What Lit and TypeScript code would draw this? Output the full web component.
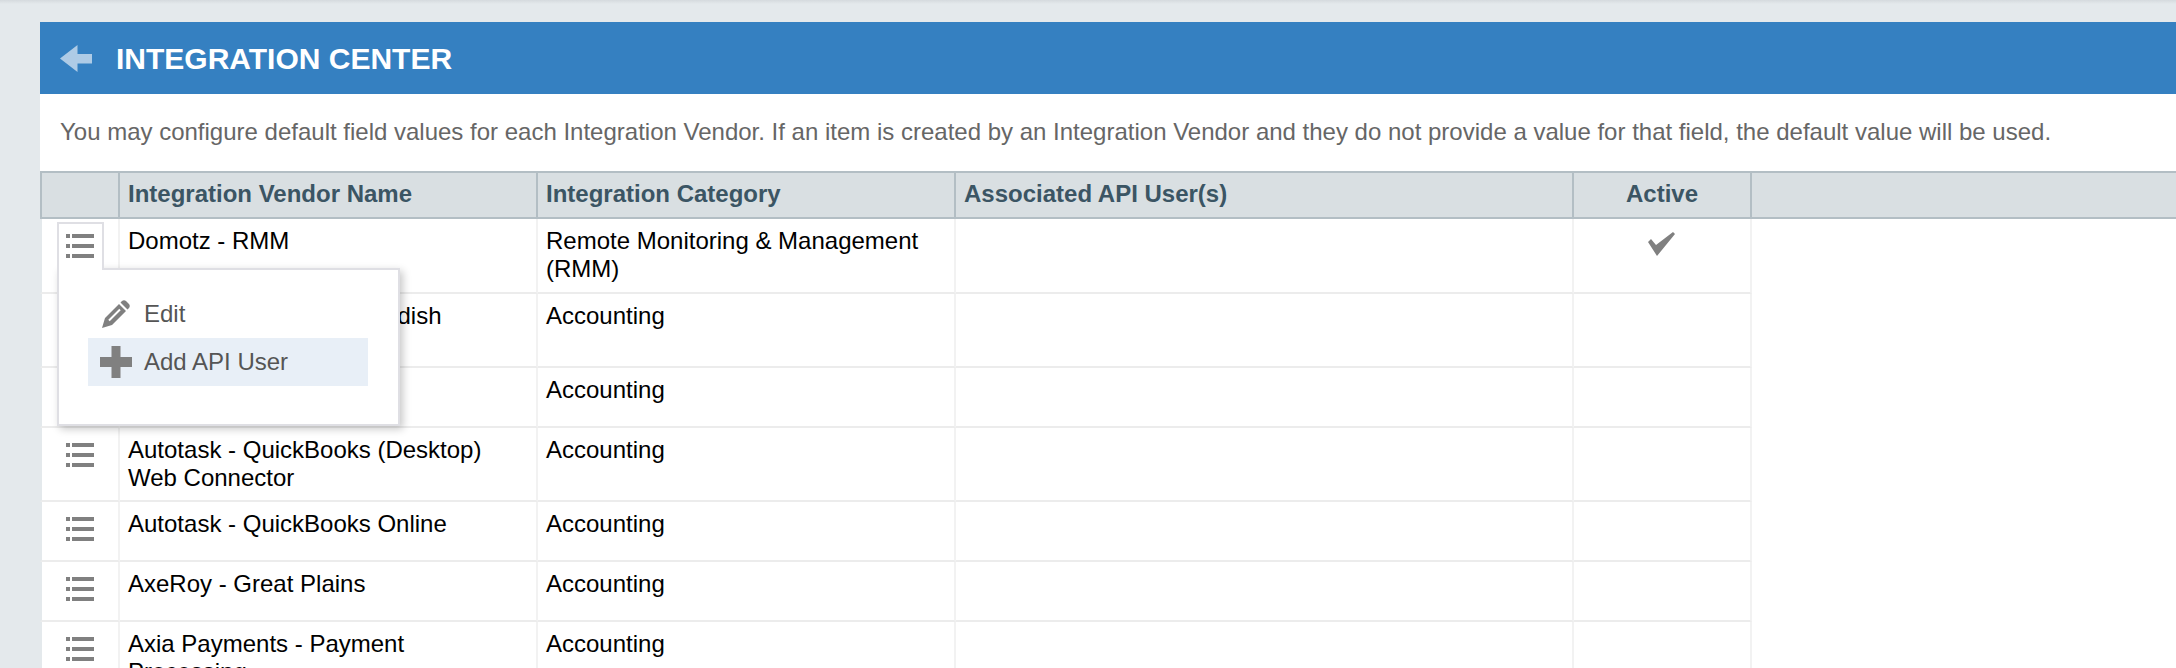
import { LitElement, html, css } from "lit";
import { customElement } from "lit/decorators.js";

const listIcon = html`<svg class="list" viewBox="0 0 28 24" width="28" height="24" aria-hidden="true"><path fill="#808080" d="M0 0h4v4H0zM6 0h22v4H6zM0 10h4v4H0zM6 10h22v4H6zM0 20h4v4H0zM6 20h22v4H6z"/></svg>`;

const rows: { name: string[]; cat: string[]; active?: boolean }[] = [
  { name: ["Domotz - RMM"], cat: ["Remote Monitoring & Management", "(RMM)"], active: true },
  { name: ["Autotask - Bokföring Swedish", "Connector"], cat: ["Accounting"] },
  { name: ["Autotask - Great Plains"], cat: ["Accounting"] },
  { name: ["Autotask - QuickBooks (Desktop)", "Web Connector"], cat: ["Accounting"] },
  { name: ["Autotask - QuickBooks Online"], cat: ["Accounting"] },
  { name: ["AxeRoy - Great Plains"], cat: ["Accounting"] },
  { name: ["Axia Payments - Payment", "Processing"], cat: ["Accounting"] },
];

@customElement("app-root")
export class AppRoot extends LitElement {
  static styles = css`
    :host {
      display: block;
      height: 668px;
      overflow: hidden;
      background: #e4e9ec;
      font-family: "Liberation Sans", Arial, sans-serif;
      font-size: 24px;
      line-height: 28px;
      color: #000;
    }
    .topshade {
      height: 4px;
      background: linear-gradient(#d5dade, #e4e9ec);
    }
    .panel {
      margin: 18px 0 0 40px;
      background: #fff;
    }
    .titlebar {
      height: 72px;
      background: #3580c1;
      display: flex;
      align-items: center;
      gap: 24px;
      padding: 2px 0 0 20px;
      box-sizing: border-box;
      color: #fff;
      font-weight: 700;
      font-size: 30px;
    }
    .arrow {
      margin-top: -2px;
    }
    .desc {
      padding: 24px 0 23px 20px;
      color: #666;
      height: 30px;
      white-space: nowrap;
    }
    .row {
      display: grid;
      grid-template-columns: 80px 418px 418px 618px 178px 1fr;
    }
    .head {
      background: #d9dfe2;
      border-top: 2px solid #b3bec4;
      border-bottom: 2px solid #b3bec4;
      height: 44px;
      font-weight: 700;
      color: #3b5564;
      line-height: 42px;
    }
    .head > div {
      border-right: 2px solid #b3bec4;
      padding-left: 8px;
    }
    .head > div:first-child {
      border-left: 2px solid #b3bec4;
    }
    .head > div:last-child {
      border-right: 0;
    }
    .center {
      text-align: center;
      padding-left: 0 !important;
    }
    .cell {
      min-height: 60px;
      padding: 8px 0 8px 8px;
      box-sizing: border-box;
      border-right: 2px solid #f2f2f2;
      border-bottom: 2px solid #ececec;
    }
    .row.first .cell {
      min-height: 75px;
    }
    .cell.blank {
      border: 0;
      padding: 0;
    }
    .action {
      position: relative;
      padding: 0;
      border-left: 2px solid #e4e9ec;
    }
    .list {
      position: absolute;
      left: 24px;
      top: 15px;
    }
    .check {
      display: block;
      margin: 5px 0 0 66px;
    }
    .trigger {
      position: absolute;
      left: 15px;
      top: 3px;
      width: 47px;
      height: 48px;
      box-sizing: border-box;
      background: #fff;
      border: 2px solid #dfdfe4;
      border-bottom: 0;
      z-index: 3;
    }
    .trigger .list {
      left: 7px;
      top: 10px;
    }
    .menu {
      position: absolute;
      left: 15px;
      top: 49px;
      width: 343px;
      height: 158px;
      box-sizing: border-box;
      background: #fff;
      border: 2px solid #dfdfe4;
      box-shadow: 3px 3px 8px rgba(0, 0, 0, 0.22);
      z-index: 2;
      padding: 20px 0 0 29px;
      color: #555;
    }
    .item {
      display: flex;
      align-items: center;
      gap: 12px;
      width: 280px;
      height: 48px;
      padding-left: 12px;
      box-sizing: border-box;
    }
    .item.on {
      background: #e8eff7;
    }
    .item svg {
      flex: none;
      width: 32px;
    }
    .pencil {
      height: 28px;
    }
  `;

  render() {
    return html`
      <div class="topshade"></div>
      <div class="panel">
        <div class="titlebar">
          <svg class="arrow" width="32" height="27" viewBox="0 0 32 27" aria-hidden="true"><path fill="#aecbe6" d="M0 13.500 17.500 0v9H32v9.500H17.500V27z"/></svg>
          <span>INTEGRATION CENTER</span>
        </div>
        <div class="desc">You may configure default field values for each Integration Vendor. If an item is created by an Integration Vendor and they do not provide a value for that field, the default value will be used.</div>
        <div class="row head">
          <div></div>
          <div>Integration Vendor Name</div>
          <div>Integration Category</div>
          <div>Associated API User(s)</div>
          <div class="center">Active</div>
          <div></div>
        </div>
        ${rows.map(
          (r, i) => html`
            <div class="row ${i === 0 ? "first" : ""}">
              <div class="cell action">
                ${i === 0
                  ? html`
                      <div class="trigger">${listIcon}</div>
                      <div class="menu">
                        <div class="item">
                          <svg class="pencil" viewBox="-2 0 32 28" aria-hidden="true"><path fill="#808080" d="M0 28 3 18 17 4l7 7L10 25zM18.500 2.500 20 1q2-1.500 4 0l3 3q1.500 2 0 4l-1.500 1.500z"/><path fill="none" stroke="#fff" stroke-width="2" d="M7 20.500 18 9.500"/></svg>
                          <span>Edit</span>
                        </div>
                        <div class="item on">
                          <svg viewBox="0 0 32 32" height="32" aria-hidden="true"><path fill="#808080" d="M11.500 0h9v11H32v10H20.500v11h-9V21H0V11h11.500z"/></svg>
                          <span>Add API User</span>
                        </div>
                      </div>
                    `
                  : listIcon}
              </div>
              <div class="cell">${r.name.map((l) => html`<div>${l}</div>`)}</div>
              <div class="cell">${r.cat.map((l) => html`<div>${l}</div>`)}</div>
              <div class="cell"></div>
              <div class="cell">
                ${r.active
                  ? html`<svg class="check" width="27" height="24" viewBox="0 0 27 24" aria-hidden="true"><path fill="#808080" d="M0 10 3 7 8 13 25 0l2 2L9 24z"/></svg>`
                  : ""}
              </div>
              <div class="cell blank"></div>
            </div>
          `
        )}
      </div>
    `;
  }
}
